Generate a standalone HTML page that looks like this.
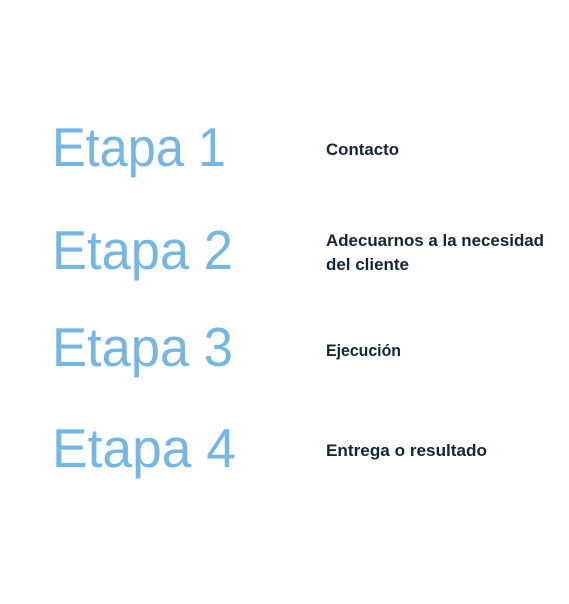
<!DOCTYPE html>
<html><head><style>
html,body{margin:0;padding:0;background:#fff;width:569px;height:604px;overflow:hidden}
svg{display:block}
.b{font-family:"Liberation Sans",sans-serif;font-size:55px;fill:#74b6e4}
.d{font-family:"Liberation Sans",sans-serif;font-size:17px;font-weight:bold;fill:#10263a}
</style></head><body>
<svg width="569" height="604" viewBox="0 0 569 604">
<text class="b" x="52" y="166" textLength="174" lengthAdjust="spacingAndGlyphs">Etapa 1</text>
<text class="b" x="52" y="269" textLength="181" lengthAdjust="spacingAndGlyphs">Etapa 2</text>
<text class="b" x="52" y="366" textLength="181" lengthAdjust="spacingAndGlyphs">Etapa 3</text>
<text class="b" x="52" y="467" textLength="184" lengthAdjust="spacingAndGlyphs">Etapa 4</text>
<text class="d" x="326" y="155" textLength="73" lengthAdjust="spacingAndGlyphs">Contacto</text>
<text class="d" x="326" y="246" textLength="218" lengthAdjust="spacingAndGlyphs">Adecuarnos a la necesidad</text>
<text class="d" x="326" y="270" textLength="83" lengthAdjust="spacingAndGlyphs">del cliente</text>
<text class="d" x="326" y="356" textLength="75" lengthAdjust="spacingAndGlyphs">Ejecución</text>
<text class="d" x="326" y="456" textLength="161" lengthAdjust="spacingAndGlyphs">Entrega o resultado</text>
</svg>
</body></html>
